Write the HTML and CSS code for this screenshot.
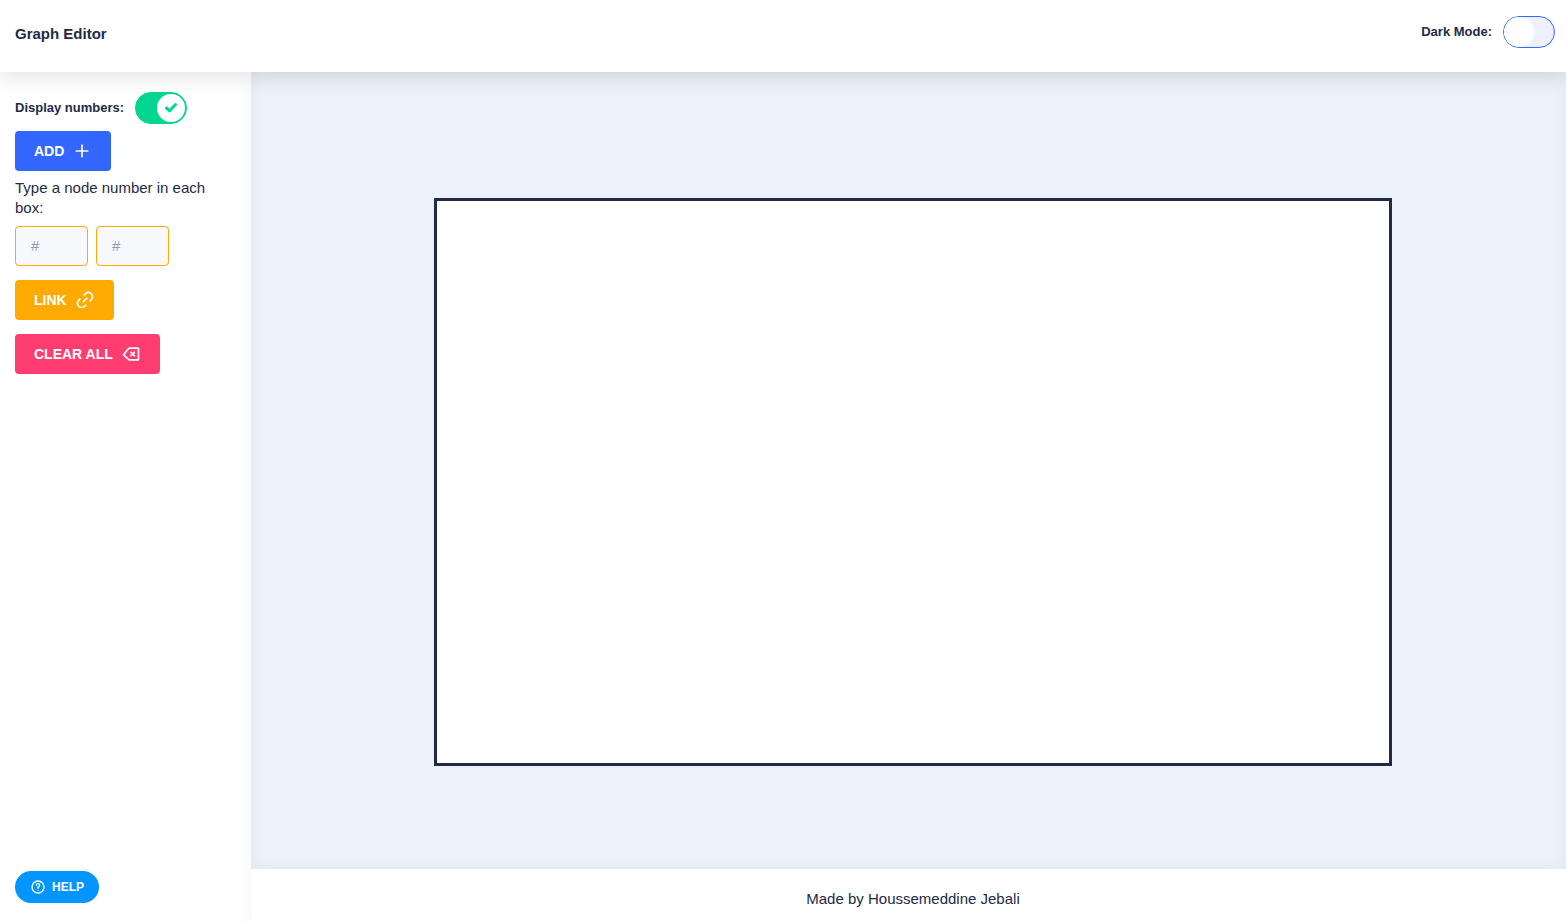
FILE: index.html
```html
<!DOCTYPE html>
<html lang="en">
<head>
<meta charset="utf-8">
<title>Graph Editor</title>
<link rel="stylesheet" href="styles.css">
</head>
<body>
<header class="header">
  <h1 class="title">Graph Editor</h1>
  <label class="toggle-row">Dark Mode:
    <input class="toggle" type="checkbox">
    <span class="track"><span class="thumb"></span></span>
  </label>
</header>
<div class="body">
  <aside class="sidebar">
    <label class="toggle-row">Display numbers:
      <input class="toggle" type="checkbox" checked>
      <span class="track"><span class="thumb"><svg class="check" viewBox="0 0 12 12"><path d="M1.5 6 4.700 8.800 10.500 2.500"/></svg></span></span>
    </label>
    <button class="button primary" type="button">ADD
      <svg class="icon" viewBox="0 0 24 24"><path d="M19 11h-6V5a1 1 0 0 0-2 0v6H5a1 1 0 0 0 0 2h6v6a1 1 0 0 0 2 0v-6h6a1 1 0 0 0 0-2z"/></svg>
    </button>
    <p class="hint">Type a node number in each box:</p>
    <div class="inputs">
      <input class="node-input" type="text" placeholder="#" aria-label="First node number">
      <input class="node-input" type="text" placeholder="#" aria-label="Second node number">
    </div>
    <button class="button warning" type="button">LINK
      <svg class="icon" viewBox="0 0 24 24"><path d="M13.29 9.29l-4 4a1 1 0 0 0 0 1.42 1 1 0 0 0 1.42 0l4-4a1 1 0 0 0-1.42-1.42z"/><path d="M12.28 17.4L11 18.67a4.2 4.2 0 0 1-5.58.4 4 4 0 0 1-.27-5.93l1.42-1.43a1 1 0 0 0 0-1.42 1 1 0 0 0-1.42 0l-1.27 1.28a6.15 6.15 0 0 0-.67 8.07 6.06 6.06 0 0 0 9.07.6l1.42-1.42a1 1 0 0 0-1.42-1.42z"/><path d="M19.66 3.22a6.18 6.18 0 0 0-8.13.68L10.45 5a1.09 1.09 0 0 0-.17 1.61 1 1 0 0 0 1.42 0L13 5.3a4.17 4.17 0 0 1 5.57-.4 4 4 0 0 1 .27 5.95l-1.42 1.43a1 1 0 0 0 0 1.42 1 1 0 0 0 1.42 0l1.42-1.42a6.06 6.06 0 0 0-.6-9.06z"/></svg>
    </button>
    <button class="button danger" type="button">CLEAR ALL
      <svg class="icon" viewBox="0 0 24 24"><path d="M20.14 4h-9.77a3 3 0 0 0-2 .78l-.1.11-6 7.48a1 1 0 0 0 .11 1.37l6 5.48a3 3 0 0 0 2 .78h9.77A1.84 1.84 0 0 0 22 18.18V5.82A1.84 1.84 0 0 0 20.14 4zM20 18h-9.63a1 1 0 0 1-.67-.26l-5.33-4.85 5.38-6.67a1 1 0 0 1 .62-.22H20z"/><path d="M11.29 14.71a1 1 0 0 0 1.42 0l1.29-1.3 1.29 1.3a1 1 0 0 0 1.42 0 1 1 0 0 0 0-1.42L15.41 12l1.3-1.29a1 1 0 0 0-1.42-1.42L14 10.59l-1.29-1.3a1 1 0 0 0-1.42 1.42l1.3 1.29-1.3 1.29a1 1 0 0 0 0 1.42z"/></svg>
    </button>
    <button class="help" type="button">
      <svg class="help-icon" viewBox="0 0 24 24"><path d="M12 2a10 10 0 1 0 10 10A10 10 0 0 0 12 2zm0 18a8 8 0 1 1 8-8 8 8 0 0 1-8 8z"/><path d="M12 6a3.500 3.500 0 0 0-3.500 3.500 1 1 0 0 0 2 0A1.500 1.500 0 1 1 12 11a1 1 0 0 0-1 1v2a1 1 0 0 0 2 0v-1.160A3.490 3.490 0 0 0 12 6z"/><circle cx="12" cy="17" r="1"/></svg>
      HELP
    </button>
  </aside>
  <div class="content">
    <main class="stage"><div class="board"></div></main>
    <footer class="footer">Made by Houssemeddine Jebali</footer>
  </div>
</div>
</body>
</html>
```
FILE: styles.css
```css
* { box-sizing: border-box; }
body {
  margin: 0;
  min-height: 100vh;
  display: flex;
  flex-direction: column;
  font: 15px/20px "Liberation Sans", Arial, sans-serif;
  color: #222b45;
  background: #fff;
}
.header {
  position: relative;
  z-index: 2;
  display: flex;
  justify-content: space-between;
  align-items: flex-start;
  height: 72px;
  padding: 16px 11px 0 15px;
  background: #fff;
  box-shadow: 0 8px 16px 0 rgba(44, 51, 73, 0.1);
}
.title { margin: 8px 0 0; font-size: 15px; line-height: 20px; }
.toggle-row {
  position: relative;
  display: flex;
  align-items: center;
  gap: 11px;
  height: 32px;
  font-size: 13px;
  font-weight: 700;
}
.toggle {
  position: absolute;
  right: 0;
  width: 52px;
  height: 32px;
  margin: 0;
  opacity: 0;
}
.track {
  display: flex;
  width: 52px;
  height: 32px;
  border: 1px solid #3366ff;
  border-radius: 16px;
  background: #edf1fd;
}
.thumb {
  display: flex;
  align-items: center;
  justify-content: center;
  width: 30px;
  height: 30px;
  border-radius: 50%;
  background: #fff;
}
.toggle:checked + .track {
  justify-content: flex-end;
  padding: 1px;
  background: #00d68f;
  border-color: #00d68f;
}
.toggle:checked + .track .thumb { width: 28px; height: 28px; }
.check { width: 12px; height: 12px; fill: none; stroke: #00d68f; stroke-width: 3; stroke-linecap: round; stroke-linejoin: round; }
.body { flex: 1; display: flex; }
.sidebar {
  display: flex;
  flex-direction: column;
  align-items: flex-start;
  width: 251px;
  padding: 20px 15px;
}
.button {
  display: flex;
  align-items: center;
  gap: 8px;
  height: 40px;
  margin: 0 0 14px;
  padding: 0 19px;
  border: 0;
  border-radius: 4px;
  color: #fff;
  font: 700 14px/16px "Liberation Sans", Arial, sans-serif;
}
.icon { width: 20px; height: 20px; fill: currentColor; }
.primary { margin: 7px 0; background: #3366ff; }
.warning { background: #ffaa00; }
.danger { background: #ff3d71; }
.hint { margin: 0; }
.inputs { display: flex; gap: 8px; margin: 8px 0 14px; }
.node-input {
  width: 73px;
  height: 40px;
  padding: 0 15px 2px;
  border: 1px solid #ffaa00;
  border-radius: 4px;
  background: #f7f9fc;
  color: #222b45;
  font: 15px/24px "Liberation Sans", Arial, sans-serif;
}
.node-input::placeholder { color: #8f9bb3; }
.help {
  display: flex;
  align-items: center;
  gap: 6px;
  height: 32px;
  margin-top: auto;
  padding: 0 15px;
  border: 0;
  border-radius: 16px;
  background: #0095ff;
  color: #fff;
  font: 700 12px/16px "Liberation Sans", Arial, sans-serif;
}
.help-icon { width: 16px; height: 16px; fill: currentColor; }
.content {
  flex: 1;
  display: flex;
  flex-direction: column;
  box-shadow: 0 8px 16px 0 rgba(44, 51, 73, 0.05);
}
.stage {
  flex: 1;
  display: flex;
  padding: 126px 174px 103px 183px;
  background: #edf1f9;
  box-shadow: inset 0 0 16px 0 rgba(44, 51, 73, 0.05);
}
.board { flex: 1; border: 3px solid #222b45; background: #fff; }
.footer {
  padding: 20px 0 14px 9px;
  text-align: center;
  background: #fff;
}
```
